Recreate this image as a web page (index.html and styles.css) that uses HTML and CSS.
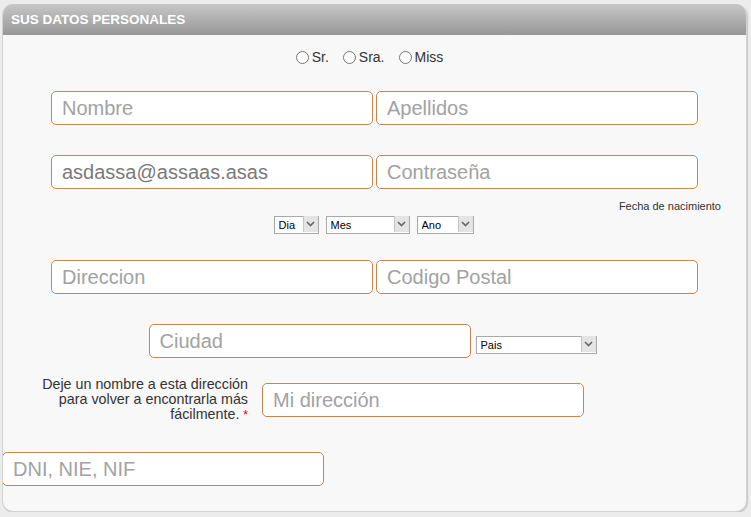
FILE: index.html
```html
<!DOCTYPE html>
<html lang="es">
<head>
<meta charset="utf-8">
<title>Sus datos personales</title>
<link rel="stylesheet" href="styles.css">
</head>
<body>
<div class="panel">
  <div class="panel-head">SUS DATOS PERSONALES</div>
  <div class="panel-body">
    <div class="radios">
      <label class="radio"><input type="radio" name="t"><span>Sr.</span></label>
      <label class="radio"><input type="radio" name="t"><span>Sra.</span></label>
      <label class="radio"><input type="radio" name="t"><span>Miss</span></label>
    </div>
    <div class="row row-1">
      <input class="field" type="text" placeholder="Nombre">
      <input class="field" type="text" placeholder="Apellidos">
    </div>
    <div class="row row-2">
      <input class="field filled" type="text" value="asdassa@assaas.asas">
      <input class="field" type="text" placeholder="Contraseña">
    </div>
    <div class="fecha">Fecha de nacimiento</div>
    <div class="dates">
      <span class="sel sel-dia"><select><option>Dia</option></select><span class="arrow"><svg width="9" height="6" viewBox="0 0 9 6"><path d="M1 1 L4.5 4.5 L8 1" fill="none" stroke="#666" stroke-width="1.6"/></svg></span></span>
      <span class="sel sel-mes"><select><option>Mes</option></select><span class="arrow"><svg width="9" height="6" viewBox="0 0 9 6"><path d="M1 1 L4.5 4.5 L8 1" fill="none" stroke="#666" stroke-width="1.6"/></svg></span></span>
      <span class="sel sel-ano"><select><option>Ano</option></select><span class="arrow"><svg width="9" height="6" viewBox="0 0 9 6"><path d="M1 1 L4.5 4.5 L8 1" fill="none" stroke="#666" stroke-width="1.6"/></svg></span></span>
    </div>
    <div class="row row-3">
      <input class="field" type="text" placeholder="Direccion">
      <input class="field" type="text" placeholder="Codigo Postal">
    </div>
    <div class="row row-city">
      <input class="field" type="text" placeholder="Ciudad">
      <span class="sel sel-pais"><select><option>Pais</option></select><span class="arrow"><svg width="9" height="6" viewBox="0 0 9 6"><path d="M1 1 L4.5 4.5 L8 1" fill="none" stroke="#666" stroke-width="1.6"/></svg></span></span>
    </div>
    <div class="row-alias">
      <div class="alias-label">Deje un nombre a esta dirección<br>para volver a encontrarla más<br>fácilmente. <span class="req">*</span></div>
      <input class="field" type="text" placeholder="Mi dirección">
    </div>
    <div class="row-dni">
      <input class="field" type="text" placeholder="DNI, NIE, NIF">
    </div>
  </div>
</div>
</body>
</html>
```
FILE: styles.css
```css
html, body {
  margin: 0;
  padding: 0;
  background: #ececec;
  font-family: "Liberation Sans", Arial, sans-serif;
}

.panel {
  width: 745px;
  margin: 4px 0 0 2px;
  box-sizing: border-box;
  background: #f8f8f8;
  border: 1px solid #d2d2d2;
  border-top: none;
  border-radius: 11px;
  box-shadow: 1px 1px 1px #c8c8c8;
  overflow: hidden;
}

.panel-head {
  height: 31px;
  box-sizing: border-box;
  padding: 8px 0 0 8px;
  background: linear-gradient(#c7c7c7, #979797);
  color: #fff;
  font-weight: bold;
  font-size: 13.5px;
  line-height: 15px;
}

.panel-body {
  padding-bottom: 25px;
}

.radios {
  margin-top: 14px;
  height: 16px;
  display: flex;
  justify-content: center;
  align-items: center;
  font-size: 14px;
  color: #333;
  padding-right: 10px;
}

.radio {
  display: flex;
  align-items: center;
  margin-right: 14px;
}
.radio:last-child { margin-right: 0; }
.radio input {
  margin: 0 3px 0 0;
  width: 13px;
  height: 13px;
}

.row {
  display: flex;
  justify-content: center;
  gap: 3px;
}

.field {
  width: 322px;
  height: 34px;
  box-sizing: border-box;
  border: 1px solid #c58650;
  border-radius: 5px;
  background: #fff;
  padding: 0 10px;
  font-family: "Liberation Sans", Arial, sans-serif;
  font-size: 20px;
  color: #7a7a7a;
  outline: none;
}
.field::placeholder { color: #a2a2a2; }

.row-1 { margin-top: 26px; }
.row-2 { margin-top: 30px; }

.fecha {
  margin-top: 11px;
  text-align: right;
  padding-right: 25px;
  font-size: 11px;
  line-height: 13px;
  color: #333;
}

.dates {
  margin-top: 2px;
  display: flex;
  justify-content: center;
  gap: 7px;
  padding-right: 2px;
}

.sel {
  position: relative;
  display: inline-block;
  height: 18px;
}
.sel select {
  appearance: none;
  -webkit-appearance: none;
  width: 100%;
  height: 18px;
  box-sizing: border-box;
  border: 1px solid #a9a9a9;
  border-radius: 0;
  background: #fff;
  margin: 0;
  padding: 0 0 0 4px;
  font-family: "Liberation Sans", Arial, sans-serif;
  font-size: 11px;
  color: #000;
  outline: none;
}
.sel .arrow {
  position: absolute;
  top: 1px;
  right: 1px;
  width: 15px;
  height: 16px;
  box-sizing: border-box;
  background: #e4e4e4;
  border-left: 1px solid #c4c4c4;
  display: flex;
  align-items: center;
  justify-content: center;
  pointer-events: none;
}
.sel-dia { width: 45px; }
.sel-mes { width: 84px; }
.sel-ano { width: 57px; }
.sel-pais { width: 121px; margin-bottom: 5px; }

.row-3 { margin-top: 27px; }

.row-city {
  margin-top: 30px;
  gap: 5px;
  align-items: flex-end;
  padding-right: 4px;
}

.row-alias {
  margin-top: 19px;
  display: flex;
  align-items: center;
  gap: 14px;
  padding-left: 36px;
}
.alias-label {
  width: 209px;
  text-align: right;
  font-size: 14.3px;
  line-height: 15px;
  color: #333;
}
.req { color: #c00; font-size: 12px; }

.row-dni {
  margin-top: 29px;
  margin-left: -1px;
}
```
